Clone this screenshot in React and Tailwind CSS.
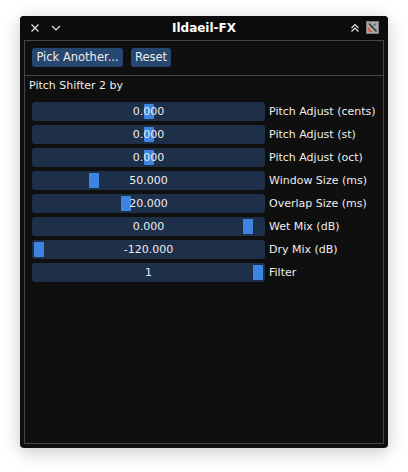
import React from 'react';

const params = [
  { label: 'Pitch Adjust (cents)', value: '0.000', pos: 0.5 },
  { label: 'Pitch Adjust (st)', value: '0.000', pos: 0.5 },
  { label: 'Pitch Adjust (oct)', value: '0.000', pos: 0.5 },
  { label: 'Window Size (ms)', value: '50.000', pos: 0.25 },
  { label: 'Overlap Size (ms)', value: '20.000', pos: 0.397 },
  { label: 'Wet Mix (dB)', value: '0.000', pos: 0.954 },
  { label: 'Dry Mix (dB)', value: '-120.000', pos: 0 },
  { label: 'Filter', value: '1', pos: 1 },
];

const font = { fontFamily: '"DejaVu Sans", sans-serif' };

const Slider = ({ label, value, pos }) => (
  <div className="flex items-center h-[19px]">
    <div className="relative w-[233px] h-[19px] bg-[#1d2f49] rounded-[3px]">
      {/* grab: 2px inset, 219px of travel */}
      <div
        className="absolute top-[2px] w-[10px] h-[15px] bg-[#3d85e0] rounded-[1px]"
        style={{ left: 2 + Math.round(pos * 219) }}
      />
      <div className="relative h-full flex items-center justify-center text-[11px] leading-[13px] text-[#ededed]">
        {value}
      </div>
    </div>
    <span className="ml-[4px] text-[11px] leading-[13px] text-[#ededed] whitespace-nowrap">{label}</span>
  </div>
);

const AppIcon = () => (
  <svg width="13" height="13" viewBox="0 0 13 13">
    <rect x="0.5" y="0.5" width="12" height="12" fill="#a9a9a9" stroke="#7c7c7c" />
    <path d="M3 2.5 L10.5 10.5" stroke="#333" strokeWidth="1.6" />
    <path d="M9.5 2.5 L5 7" stroke="#555" strokeWidth="1" />
    <path d="M2.5 6.5 Q2.5 10.5 6 10.5" stroke="#e0502a" strokeWidth="1.6" fill="none" />
    <rect x="8.5" y="3" width="1.5" height="1.5" fill="#4a7fd0" />
  </svg>
);

export default function App() {
  return (
    <div className="w-[408px] h-[472px] bg-white pt-[16px] pl-[20px]" style={font}>
      <div className="w-[368px] h-[432px] bg-[#0f0f0f] rounded-[4px] shadow-[0_4px_18px_rgba(0,0,0,0.22)] flex flex-col overflow-hidden">
        {/* title bar */}
        <div className="relative h-[24px] flex items-center justify-center bg-[#0c0c0c]">
          <div className="absolute left-[10px] top-[7px] flex items-center gap-[11px]">
            <svg width="10" height="10" viewBox="0 0 10 10">
              <path d="M1.5 1.5 L8.5 8.5 M8.5 1.5 L1.5 8.5" stroke="#e6e6e6" strokeWidth="1.2" />
            </svg>
            <svg width="10" height="10" viewBox="0 0 10 10">
              <path d="M1 3 L5 7 L9 3" stroke="#e6e6e6" strokeWidth="1.2" fill="none" />
            </svg>
          </div>
          <span className="text-[12px] font-bold text-white leading-[14px]">Ildaeil-FX</span>
          <div className="absolute right-[9px] top-[5px] flex items-center gap-[6px]">
            <svg width="10" height="10" viewBox="0 0 10 10">
              <path d="M1.5 5 L5 1.5 L8.5 5 M1.5 8.5 L5 5 L8.5 8.5" stroke="#e6e6e6" strokeWidth="1.2" fill="none" />
            </svg>
            <AppIcon />
          </div>
        </div>

        {/* content frame */}
        <div className="mx-[4px] h-[404px] border border-[#45454f] flex flex-col">
          <div className="flex gap-[8px] px-[7px] pt-[7px] pb-[8px]">
            <button className="h-[19px] w-[91px] bg-[#26476f] rounded-[3px] text-[11.5px] text-[#ededed] leading-[13px]">
              Pick Another...
            </button>
            <button className="h-[19px] w-[40px] bg-[#26476f] rounded-[3px] text-[11.5px] text-[#ededed] leading-[13px]">
              Reset
            </button>
          </div>
          <div className="h-px bg-[#45454f]" />
          <div className="px-[4px] pt-[3px] text-[11px] leading-[13px] text-[#ededed]">Pitch Shifter 2 by</div>
          <div className="flex flex-col gap-[4px] pl-[7px] mt-[10px]">
            {params.map((p) => (
              <Slider key={p.label} {...p} />
            ))}
          </div>
        </div>
      </div>
    </div>
  );
}
